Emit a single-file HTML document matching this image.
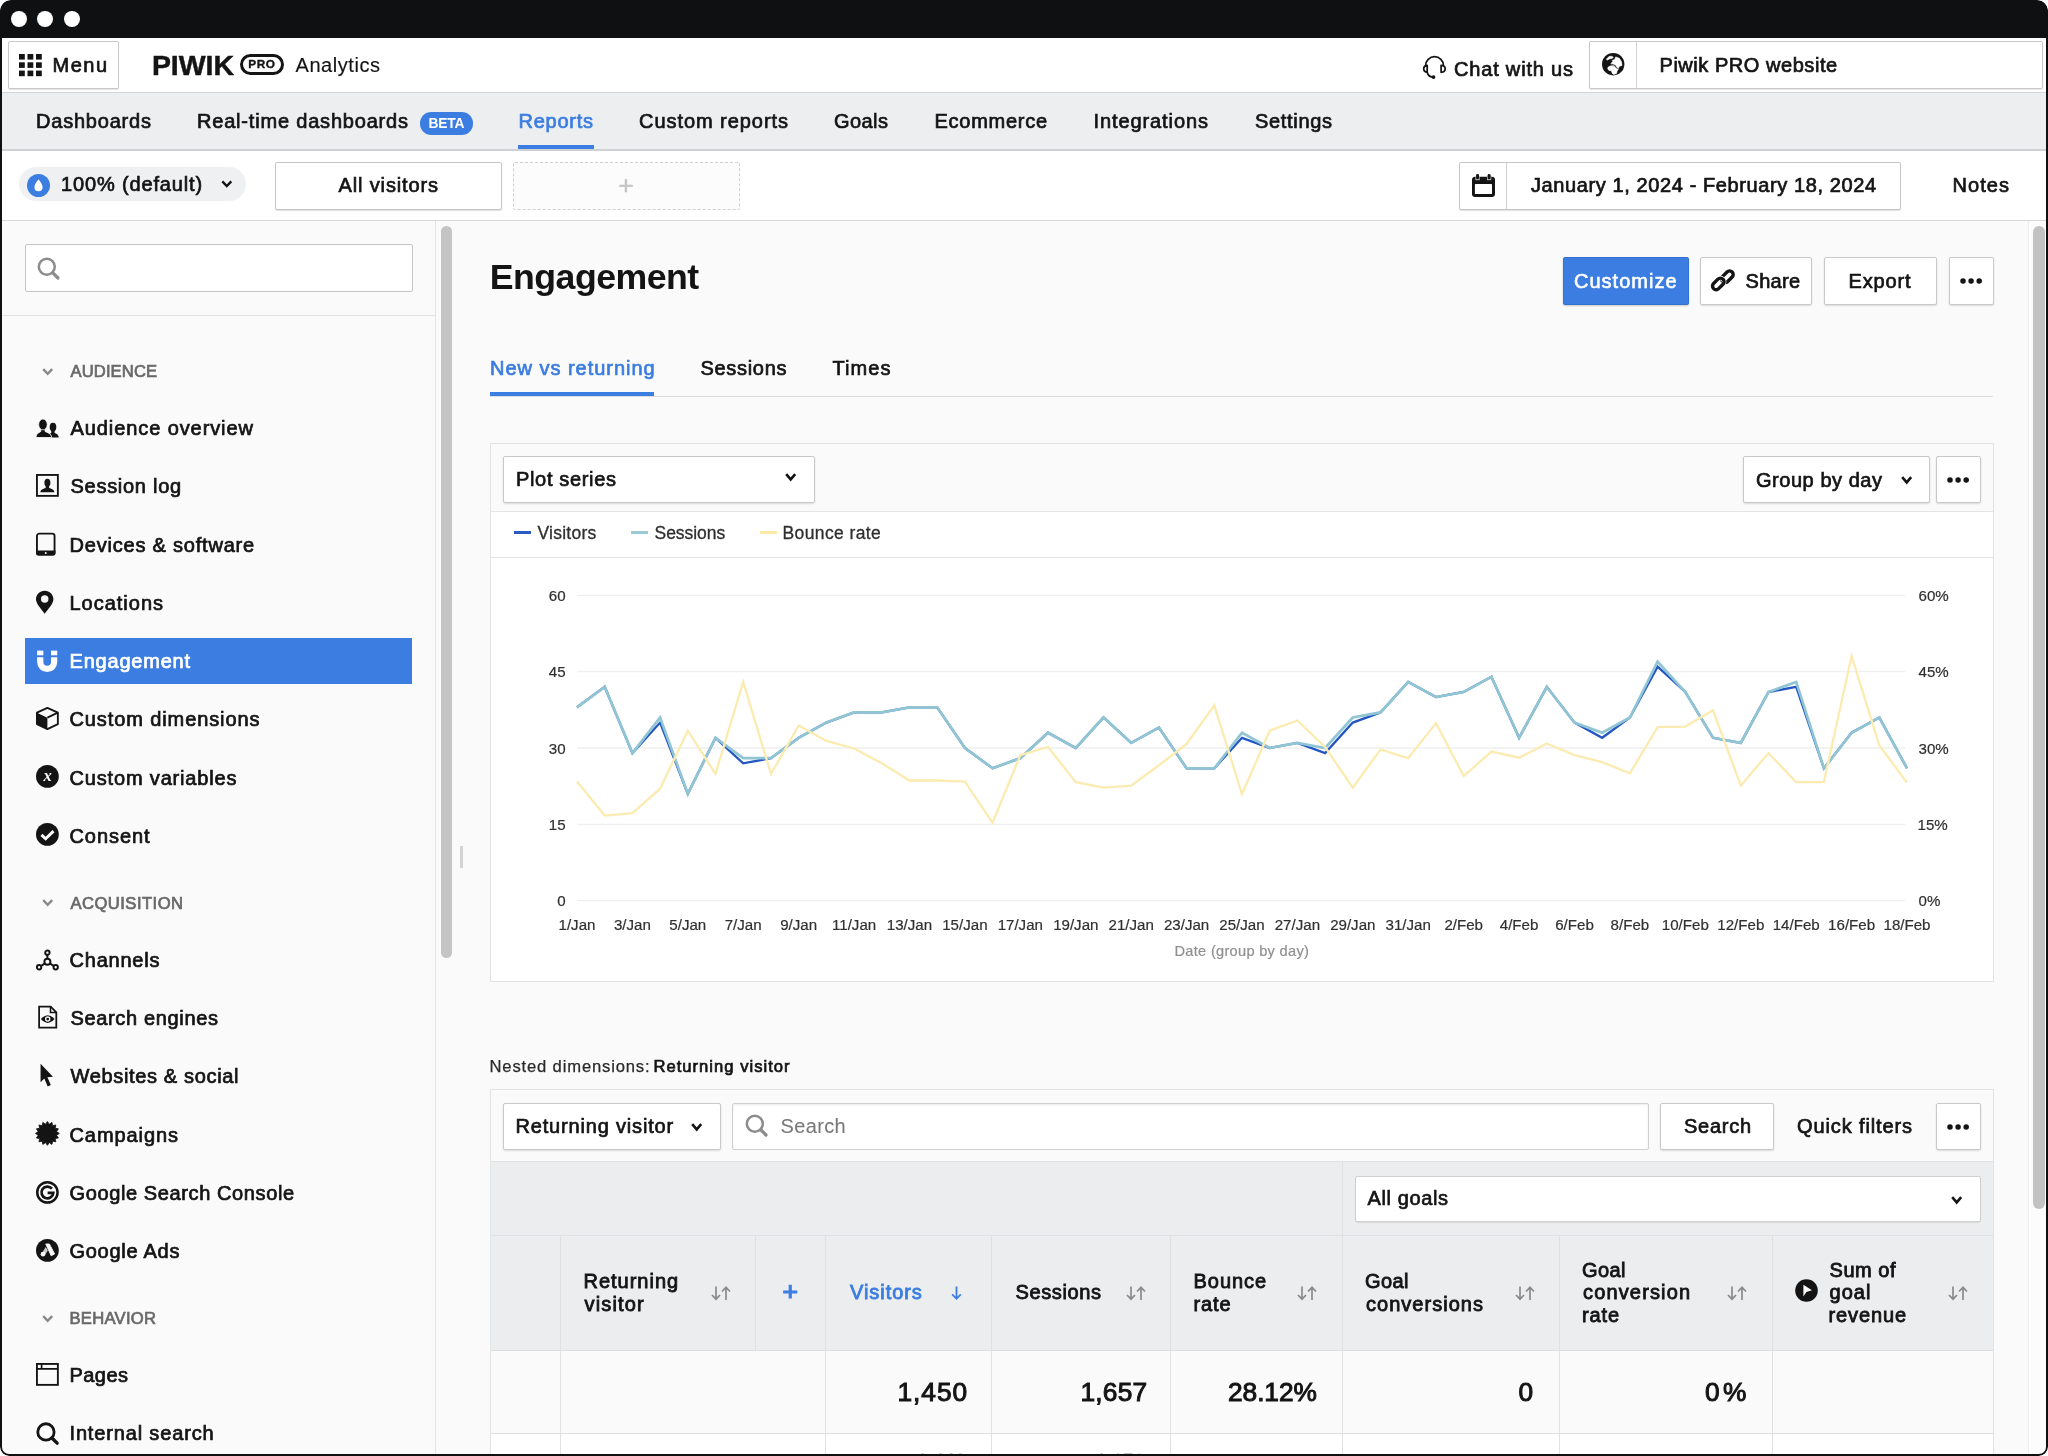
<!DOCTYPE html>
<html lang="en"><head><meta charset="utf-8"><title>Piwik PRO Analytics - Engagement</title>
<style>
html,body{margin:0;padding:0;background:#fff;}
body{width:2048px;height:1456px;overflow:hidden;position:relative;font-family:"Liberation Sans",sans-serif;}
.t{position:absolute;white-space:nowrap;line-height:1;}
svg{overflow:visible;}
</style></head><body>
<div style="position:absolute;left:0;top:0;width:2048px;height:1456px;overflow:hidden;border-radius:11px 11px 9px 9px;will-change:transform;">
<div style="position:absolute;left:0px;top:0px;width:2048px;height:1456px;background:#fafafa;"></div>
<div style="position:absolute;left:0px;top:38px;width:2048px;height:54px;background:#fff;"></div>
<div style="position:absolute;left:0px;top:92px;width:2048px;height:1px;background:#d3d5d8;"></div>
<div style="position:absolute;left:0px;top:93px;width:2048px;height:56px;background:#eceef0;"></div>
<div style="position:absolute;left:0px;top:149px;width:2048px;height:2px;background:#cfd1d4;"></div>
<div style="position:absolute;left:0px;top:151px;width:2048px;height:69px;background:#fff;"></div>
<div style="position:absolute;left:0px;top:220px;width:2048px;height:1px;background:#d6d8da;"></div>
<div style="position:absolute;left:8px;top:41px;width:111px;height:48px;box-sizing:border-box;border:1px solid #c9c9c9;border-radius:2px;background:#fff;box-shadow:0 1px 1px rgba(0,0,0,.12);"></div>
<svg style="position:absolute;left:19px;top:54px;" width="23" height="22.2" viewBox="0 0 23 22.2"><rect x="0.0" y="0.0" width="5.8" height="5.6" fill="#141414"/><rect x="8.5" y="0.0" width="5.8" height="5.6" fill="#141414"/><rect x="17.0" y="0.0" width="5.8" height="5.6" fill="#141414"/><rect x="0.0" y="8.3" width="5.8" height="5.6" fill="#141414"/><rect x="8.5" y="8.3" width="5.8" height="5.6" fill="#141414"/><rect x="17.0" y="8.3" width="5.8" height="5.6" fill="#141414"/><rect x="0.0" y="16.6" width="5.8" height="5.6" fill="#141414"/><rect x="8.5" y="16.6" width="5.8" height="5.6" fill="#141414"/><rect x="17.0" y="16.6" width="5.8" height="5.6" fill="#141414"/></svg>
<span class="t" style="left:52.50px;top:54.77px;font-size:20px;color:#141414;letter-spacing:1.531px;-webkit-text-stroke:0.7px #141414;">Menu</span>
<span class="t" style="left:151.90px;top:50.87px;font-size:28.5px;color:#141414;font-weight:700;letter-spacing:-0.061px;-webkit-text-stroke:0.45px #141414;paint-order:stroke;stroke-linejoin:round;">PIWIK</span>
<div style="position:absolute;left:239.5px;top:54.2px;width:44.2px;height:21.2px;box-sizing:border-box;border:3px solid #141414;border-radius:10.6px;"></div>
<span class="t" style="left:248.20px;top:58.91px;font-size:11.8px;color:#141414;font-weight:700;letter-spacing:0.606px;-webkit-text-stroke:0.35px #141414;">PRO</span>
<span class="t" style="left:295.50px;top:54.87px;font-size:20px;color:#141414;letter-spacing:0.559px;-webkit-text-stroke:0.15px #141414;">Analytics</span>
<svg style="position:absolute;left:1418px;top:50px;" width="34" height="34" viewBox="0 0 34 34"><g fill="none" stroke="#141414" stroke-width="1.75" stroke-linejoin="round"><path d="M7.6 15.6 A8.95 8.95 0 0 1 25.5 15.6"/><path d="M9.2 15.4 V22.1 Q5.7 21.9 5.7 18.7 Q5.7 15.6 9.2 15.4Z"/><path d="M23.1 15.4 V22.3 Q27.2 22.2 27.2 18.8 Q27.2 15.6 23.1 15.4Z"/><path d="M9.2 22.1 Q9.6 26.4 15 27.1"/></g><circle cx="15.5" cy="27.1" r="1.9" fill="#141414"/></svg>
<span class="t" style="left:1454.00px;top:59.27px;font-size:20px;color:#141414;letter-spacing:0.814px;-webkit-text-stroke:0.7px #141414;">Chat with us</span>
<div style="position:absolute;left:1589px;top:41px;width:454px;height:48px;box-sizing:border-box;border:1px solid #c9c9c9;border-radius:2px;background:#fff;box-shadow:0 1px 1px rgba(0,0,0,.10);"></div>
<div style="position:absolute;left:1636px;top:42px;width:1px;height:46px;background:#d4d4d4;"></div>
<svg style="position:absolute;left:1602px;top:53.4px;" width="22.4" height="22.4" viewBox="0 0 22.4 22.4"><circle cx="11.2" cy="11.2" r="11.2" fill="#141414"/><g fill="#fff" stroke="#fff" stroke-width="0.6" stroke-linejoin="round"><path d="M4.3 6.2 L7.1 3.6 L9.2 3.2 L11.3 4.1 L10.4 5.3 L7.1 6 L5.7 7.1Z"/><path d="M13.7 3.9 L17.4 5.3 L19.5 8.8 L20 12.5 L17.4 13.2 L16.5 15.1 L14.6 15.3 L13.4 13.4 L10.4 12.5 L9 11.1 L9.5 9.7 L10.9 8.8 L10.2 7.4 L12.7 6.4Z"/><path d="M6.2 14.1 L9 12.7 L11.8 13.4 L13.9 14.8 L16.5 15.8 L15.1 18.1 L14.6 20.4 L11.8 21.4 L10.2 20.4 L9.5 17.9 L6.7 17.2 L5.7 15.5Z"/></g><path d="M9.2 11.3 L13.2 12.4 L14.2 14.6 L15.6 15.4" fill="none" stroke="#141414" stroke-width="0.9"/></svg>
<span class="t" style="left:1659.50px;top:54.87px;font-size:20px;color:#141414;letter-spacing:0.543px;-webkit-text-stroke:0.7px #141414;">Piwik PRO website</span>
<span class="t" style="left:36.00px;top:111.27px;font-size:20px;color:#141414;letter-spacing:0.795px;-webkit-text-stroke:0.7px #141414;">Dashboards</span>
<span class="t" style="left:197.00px;top:111.27px;font-size:20px;color:#141414;letter-spacing:0.808px;-webkit-text-stroke:0.7px #141414;">Real-time dashboards</span>
<div style="position:absolute;left:420px;top:112px;width:53px;height:22.6px;background:#3b7de0;border-radius:11.3px;"></div>
<span class="t" style="left:428.50px;top:116.72px;font-size:13.8px;color:#fff;font-weight:700;letter-spacing:-0.190px;">BETA</span>
<span class="t" style="left:518.50px;top:111.27px;font-size:20px;color:#3b7de0;letter-spacing:0.745px;-webkit-text-stroke:0.7px #3b7de0;">Reports</span>
<div style="position:absolute;left:518px;top:144.7px;width:76px;height:4px;background:#3b7de0;"></div>
<span class="t" style="left:639.00px;top:111.27px;font-size:20px;color:#141414;letter-spacing:0.945px;-webkit-text-stroke:0.7px #141414;">Custom reports</span>
<span class="t" style="left:834.00px;top:111.27px;font-size:20px;color:#141414;letter-spacing:0.438px;-webkit-text-stroke:0.7px #141414;">Goals</span>
<span class="t" style="left:934.50px;top:111.27px;font-size:20px;color:#141414;letter-spacing:0.742px;-webkit-text-stroke:0.7px #141414;">Ecommerce</span>
<span class="t" style="left:1093.50px;top:111.27px;font-size:20px;color:#141414;letter-spacing:0.908px;-webkit-text-stroke:0.7px #141414;">Integrations</span>
<span class="t" style="left:1255.00px;top:111.27px;font-size:20px;color:#141414;letter-spacing:0.676px;-webkit-text-stroke:0.7px #141414;">Settings</span>
<div style="position:absolute;left:19px;top:167px;width:227px;height:34px;background:#eef0f2;border-radius:17px;"></div>
<svg style="position:absolute;left:27px;top:173.5px;" width="23" height="23" viewBox="0 0 23 23"><circle cx="11.5" cy="11.5" r="11.5" fill="#3b7de0"/><path d="M11.5 5.2 C13.5 8 15.6 10.6 15.6 13.2 A4.1 4.1 0 0 1 7.4 13.2 C7.4 10.6 9.5 8 11.5 5.2Z" fill="#fff"/></svg>
<span class="t" style="left:61.00px;top:174.47px;font-size:20px;color:#141414;letter-spacing:0.852px;-webkit-text-stroke:0.7px #141414;">100% (default)</span>
<svg style="position:absolute;left:220.6px;top:180px;" width="11.6" height="8" viewBox="0 0 11.6 8"><path d="M1.3 1.3 L5.8 6 L10.3 1.3" fill="none" stroke="#141414" stroke-width="2.4"/></svg>
<div style="position:absolute;left:275px;top:162px;width:227px;height:48px;box-sizing:border-box;border:1px solid #c6c6c6;border-radius:2px;background:#fff;box-shadow:0 1px 1px rgba(0,0,0,.12);"></div>
<span class="t" style="left:338.50px;top:175.27px;font-size:20px;color:#141414;letter-spacing:0.863px;-webkit-text-stroke:0.7px #141414;">All visitors</span>
<div style="position:absolute;left:513px;top:162px;width:227px;height:48px;box-sizing:border-box;border:1px dashed #d0d0d0;border-radius:2px;background:#fcfcfc;"></div>
<span class="t" style="left:618.30px;top:172.15px;font-size:26.4px;color:#c4c4c4;-webkit-text-stroke:0.5px #c4c4c4;">+</span>
<div style="position:absolute;left:1459px;top:162px;width:442.4px;height:48px;box-sizing:border-box;border:1px solid #c6c6c6;border-radius:2px;background:#fff;box-shadow:0 1px 1px rgba(0,0,0,.12);"></div>
<div style="position:absolute;left:1506.4px;top:163px;width:1px;height:46px;background:#d0d0d0;"></div>
<svg style="position:absolute;left:1472px;top:174px;" width="23" height="23" viewBox="0 0 23 23"><rect x="0" y="2.8" width="23" height="20.2" rx="3.2" fill="#141414"/><rect x="2.9" y="10.1" width="17.1" height="9.9" rx="0.6" fill="#fff"/><rect x="3.4" y="2.6" width="4.3" height="3.6" fill="#b5b5b5"/><rect x="15" y="2.6" width="4.3" height="3.6" fill="#b5b5b5"/><rect x="4.1" y="0" width="2.9" height="5.3" rx="1.2" fill="#141414"/><rect x="15.7" y="0" width="2.9" height="5.3" rx="1.2" fill="#141414"/></svg>
<span class="t" style="left:1531.00px;top:175.37px;font-size:20px;color:#141414;letter-spacing:0.602px;-webkit-text-stroke:0.7px #141414;">January 1, 2024 - February 18, 2024</span>
<span class="t" style="left:1952.50px;top:175.37px;font-size:20px;color:#141414;letter-spacing:1.063px;-webkit-text-stroke:0.7px #141414;">Notes</span>
<div style="position:absolute;left:0px;top:221px;width:436px;height:1235px;background:#fafafa;"></div>
<div style="position:absolute;left:435px;top:221px;width:1px;height:1235px;background:#e4e4e4;"></div>
<div style="position:absolute;left:25px;top:244px;width:388px;height:48px;box-sizing:border-box;border:1px solid #c6c6c6;background:#fff;border-radius:2px;"></div>
<svg style="position:absolute;left:37px;top:257px;" width="24" height="24" viewBox="0 0 24 24"><circle cx="9.8" cy="9.8" r="8" fill="none" stroke="#8c8c8c" stroke-width="2.5"/><path d="M15.8 15.8 L21 21" stroke="#8c8c8c" stroke-width="3.2" stroke-linecap="round"/></svg>
<div style="position:absolute;left:0px;top:315px;width:435px;height:1px;background:#e2e2e2;"></div>
<div style="position:absolute;left:441px;top:226px;width:11px;height:732px;background:#c4c4c4;border-radius:6px;"></div>
<div style="position:absolute;left:459.6px;top:846px;width:3.2px;height:22px;background:#d3d3d3;"></div>
<svg style="position:absolute;left:41.8px;top:367.9px;" width="11.4" height="7.6" viewBox="0 0 11.4 7.6"><path d="M1.2 1.2 L5.7 5.8 L10.2 1.2" fill="none" stroke="#8a8a8a" stroke-width="2.5"/></svg>
<span class="t" style="left:70.50px;top:364.05px;font-size:16.6px;color:#696969;letter-spacing:0.117px;-webkit-text-stroke:0.7px #696969;">AUDIENCE</span>
<svg style="position:absolute;left:35.9px;top:416.8px;" width="22.8" height="22.8" viewBox="0 0 22 22"><ellipse cx="16.4" cy="9.7" rx="3.2" ry="4.2" fill="#141414"/><path d="M13 19.9 V16.4 L14.7 15.4 V12.5 H18 V15.4 C20 16.3 21.8 16.9 22 19.9Z" fill="#141414"/><path d="M0 19.9 C0 15.8 2.8 15.2 4.6 13.9 L4.7 11 H8.7 L8.8 13.9 C11.5 15.2 14.6 15.8 15.2 19.9Z" fill="#141414" stroke="#fafafa" stroke-width="0.9"/><ellipse cx="6.7" cy="7.2" rx="4.1" ry="5.2" fill="#141414" stroke="#fafafa" stroke-width="0.7"/></svg>
<span class="t" style="left:70.50px;top:418.47px;font-size:20px;color:#141414;letter-spacing:0.911px;-webkit-text-stroke:0.72px #141414;">Audience overview</span>
<svg style="position:absolute;left:35.9px;top:474.3px;" width="22.8" height="22.8" viewBox="0 0 22 22"><rect x="0.9" y="0.9" width="20.2" height="20.2" fill="none" stroke="#141414" stroke-width="1.8"/><ellipse cx="11" cy="8.4" rx="2.9" ry="3.8" fill="#141414"/><path d="M4.2 17.6 C4.4 15.2 6.8 14.6 9.3 13.6 L9.4 11.5 H12.6 L12.7 13.6 C15.2 14.6 17.6 15.2 17.8 17.6Z" fill="#141414"/></svg>
<span class="t" style="left:70.50px;top:476.47px;font-size:20px;color:#141414;letter-spacing:0.722px;-webkit-text-stroke:0.72px #141414;">Session log</span>
<svg style="position:absolute;left:35.9px;top:532.5px;" width="22.8" height="22.8" viewBox="0 0 22 22"><rect x="0.9" y="0.6" width="17" height="20.2" rx="2.3" fill="none" stroke="#141414" stroke-width="1.8"/><path d="M0 16.8 H18.8 V19.2 Q18.8 21.7 16.3 21.7 H2.5 Q0 21.7 0 19.2Z" fill="#141414"/><circle cx="9.4" cy="19.3" r="0.95" fill="#fafafa"/></svg>
<span class="t" style="left:69.50px;top:534.97px;font-size:20px;color:#141414;letter-spacing:0.791px;-webkit-text-stroke:0.72px #141414;">Devices &amp; software</span>
<svg style="position:absolute;left:35.9px;top:591.1px;" width="22.8" height="22.8" viewBox="0 0 22 22"><path d="M8.4 -0.2 C13.2 -0.2 16.8 3.4 16.8 8 C16.8 12.6 11.6 17.4 8.4 22 C5.2 17.4 0 12.6 0 8 C0 3.4 3.6 -0.2 8.4 -0.2Z" fill="#141414"/><circle cx="8.4" cy="7.7" r="3.6" fill="#fafafa"/></svg>
<span class="t" style="left:69.50px;top:592.97px;font-size:20px;color:#141414;letter-spacing:0.986px;-webkit-text-stroke:0.72px #141414;">Locations</span>
<div style="position:absolute;left:25px;top:638px;width:387px;height:46px;background:#3b7de0;"></div>
<svg style="position:absolute;left:35.9px;top:649.8000000000001px;" width="22.8" height="22.8" viewBox="0 0 22 22"><rect x="1.1" y="0.6" width="6" height="4.5" fill="#fff"/><rect x="14.5" y="0.6" width="6" height="4.5" fill="#fff"/><path d="M1.1 6.9 H7.1 V11.6 A3.7 3.7 0 0 0 14.5 11.6 V6.9 H20.5 V11.6 A9.7 9.7 0 0 1 1.1 11.6Z" fill="#fff"/></svg>
<span class="t" style="left:69.50px;top:651.47px;font-size:20px;color:#fff;letter-spacing:0.793px;-webkit-text-stroke:0.72px #fff;">Engagement</span>
<svg style="position:absolute;left:35.9px;top:707.0px;" width="22.8" height="22.8" viewBox="0 0 22 22"><path d="M11 0.9 L21.1 5.5 V16.5 L11 21.3 L0.9 16.5 V5.5Z" fill="none" stroke="#141414" stroke-width="1.8" stroke-linejoin="round"/><path d="M0.9 5.5 L11 10.3 V21.3 L0.9 16.5Z" fill="#141414"/><path d="M11 10.3 L21.1 5.5" stroke="#141414" stroke-width="1.8"/></svg>
<span class="t" style="left:69.50px;top:709.47px;font-size:20px;color:#141414;letter-spacing:0.898px;-webkit-text-stroke:0.72px #141414;">Custom dimensions</span>
<svg style="position:absolute;left:35.9px;top:765.3000000000001px;" width="22.8" height="22.8" viewBox="0 0 22 22"><circle cx="11" cy="11" r="11" fill="#141414"/><text x="11.2" y="15.8" text-anchor="middle" font-family="Liberation Serif, serif" font-style="italic" font-weight="700" font-size="16" fill="#fafafa">x</text></svg>
<span class="t" style="left:69.50px;top:767.97px;font-size:20px;color:#141414;letter-spacing:0.833px;-webkit-text-stroke:0.72px #141414;">Custom variables</span>
<svg style="position:absolute;left:35.9px;top:823.4px;" width="22.8" height="22.8" viewBox="0 0 22 22"><circle cx="11" cy="11" r="11" fill="#141414"/><path d="M5.3 11.4 L9.3 15.2 L16.9 7.8" fill="none" stroke="#fafafa" stroke-width="2.9"/></svg>
<span class="t" style="left:69.50px;top:825.97px;font-size:20px;color:#141414;letter-spacing:0.927px;-webkit-text-stroke:0.72px #141414;">Consent</span>
<svg style="position:absolute;left:41.8px;top:899.4px;" width="11.4" height="7.6" viewBox="0 0 11.4 7.6"><path d="M1.2 1.2 L5.7 5.8 L10.2 1.2" fill="none" stroke="#8a8a8a" stroke-width="2.5"/></svg>
<span class="t" style="left:70.50px;top:895.55px;font-size:16.6px;color:#696969;letter-spacing:0.462px;-webkit-text-stroke:0.7px #696969;">ACQUISITION</span>
<svg style="position:absolute;left:35.9px;top:948.5px;" width="22.8" height="22.8" viewBox="0 0 22 22"><g fill="none" stroke="#141414" stroke-width="1.9"><circle cx="11" cy="3.5" r="2.1"/><circle cx="3" cy="17.6" r="2.1"/><circle cx="19" cy="17.6" r="2.1"/><circle cx="11" cy="12.4" r="2.9"/><path d="M11 5.3 V9.7 M8.7 13.9 L4.6 16.5 M13.3 13.9 L17.4 16.5"/></g></svg>
<span class="t" style="left:69.50px;top:950.47px;font-size:20px;color:#141414;letter-spacing:0.785px;-webkit-text-stroke:0.72px #141414;">Channels</span>
<svg style="position:absolute;left:35.9px;top:1006.0px;" width="22.8" height="22.8" viewBox="0 0 22 22"><path d="M3 0.7 H14.2 L19.6 6.1 V20.9 H3Z" fill="none" stroke="#141414" stroke-width="1.7"/><path d="M14 0.9 V6.3 H19.4" fill="none" stroke="#141414" stroke-width="1.5"/><path d="M4.7 12.6 Q11.3 5.2 17.9 12.6 Q11.3 20 4.7 12.6Z" fill="#141414"/><circle cx="11.3" cy="12.6" r="2.6" fill="#fafafa"/><circle cx="11.3" cy="12.6" r="1.35" fill="#141414"/></svg>
<span class="t" style="left:70.50px;top:1008.47px;font-size:20px;color:#141414;letter-spacing:0.655px;-webkit-text-stroke:0.72px #141414;">Search engines</span>
<svg style="position:absolute;left:35.9px;top:1064.3999999999999px;" width="22.8" height="22.8" viewBox="0 0 22 22"><path d="M4.4 -0.2 L16.4 12.2 L11 12.7 L14.3 20.2 L11.3 21.6 L8 14 L4.4 17.5Z" fill="#141414"/></svg>
<span class="t" style="left:70.50px;top:1066.47px;font-size:20px;color:#141414;letter-spacing:0.655px;-webkit-text-stroke:0.72px #141414;">Websites &amp; social</span>
<svg style="position:absolute;left:35.9px;top:1122.3999999999999px;" width="22.8" height="22.8" viewBox="0 0 22 22"><polygon points="11.00,-0.50 12.76,2.17 15.40,0.38 16.00,3.52 19.13,2.87 18.48,6.00 21.62,6.60 19.83,9.24 22.50,11.00 19.83,12.76 21.62,15.40 18.48,16.00 19.13,19.13 16.00,18.48 15.40,21.62 12.76,19.83 11.00,22.50 9.24,19.83 6.60,21.62 6.00,18.48 2.87,19.13 3.52,16.00 0.38,15.40 2.17,12.76 -0.50,11.00 2.17,9.24 0.38,6.60 3.52,6.00 2.87,2.87 6.00,3.52 6.60,0.38 9.24,2.17" fill="#141414" stroke="#141414" stroke-width="0.8" stroke-linejoin="round"/></svg>
<span class="t" style="left:69.50px;top:1124.97px;font-size:20px;color:#141414;letter-spacing:0.917px;-webkit-text-stroke:0.72px #141414;">Campaigns</span>
<svg style="position:absolute;left:35.9px;top:1180.6999999999998px;" width="22.8" height="22.8" viewBox="0 0 22 22"><circle cx="11" cy="11" r="9.8" fill="none" stroke="#141414" stroke-width="2.4"/><path d="M15.4 7.4 A5.7 5.7 0 1 0 16.7 11.5 H11.2" fill="none" stroke="#141414" stroke-width="2.6"/></svg>
<span class="t" style="left:69.50px;top:1182.97px;font-size:20px;color:#141414;letter-spacing:0.613px;-webkit-text-stroke:0.72px #141414;">Google Search Console</span>
<svg style="position:absolute;left:35.9px;top:1238.6999999999998px;" width="22.8" height="22.8" viewBox="0 0 22 22"><circle cx="11" cy="11" r="11" fill="#141414"/><path d="M9.4 4.8 L12.9 4.8 L18 14.4 L14.6 16.2Z" fill="#fafafa" stroke="#fafafa" stroke-width="0.8" stroke-linejoin="round"/><path d="M9.4 7.6 L11.4 11 L8.6 15.8 L5.4 14.2Z" fill="#fafafa" opacity=".8"/><circle cx="6.7" cy="14.6" r="2.2" fill="#fafafa"/></svg>
<span class="t" style="left:69.50px;top:1241.47px;font-size:20px;color:#141414;letter-spacing:0.721px;-webkit-text-stroke:0.72px #141414;">Google Ads</span>
<svg style="position:absolute;left:41.8px;top:1314.9px;" width="11.4" height="7.6" viewBox="0 0 11.4 7.6"><path d="M1.2 1.2 L5.7 5.8 L10.2 1.2" fill="none" stroke="#8a8a8a" stroke-width="2.5"/></svg>
<span class="t" style="left:69.50px;top:1311.05px;font-size:16.6px;color:#696969;letter-spacing:0.280px;-webkit-text-stroke:0.7px #696969;">BEHAVIOR</span>
<svg style="position:absolute;left:35.9px;top:1363.1999999999998px;" width="22.8" height="22.8" viewBox="0 0 22 22"><rect x="0.9" y="0.9" width="20.2" height="20.2" fill="none" stroke="#141414" stroke-width="1.8"/><path d="M1 5.6 H21 M5.4 1 V5.6" stroke="#141414" stroke-width="1.6"/></svg>
<span class="t" style="left:69.50px;top:1365.47px;font-size:20px;color:#141414;letter-spacing:0.448px;-webkit-text-stroke:0.72px #141414;">Pages</span>
<svg style="position:absolute;left:35.9px;top:1421.8999999999999px;" width="22.8" height="22.8" viewBox="0 0 22 22"><circle cx="9.6" cy="9.6" r="7.9" fill="none" stroke="#141414" stroke-width="2.7"/><path d="M15.4 15.4 L20.4 20.4" stroke="#141414" stroke-width="3.3" stroke-linecap="round"/></svg>
<span class="t" style="left:69.50px;top:1423.47px;font-size:20px;color:#141414;letter-spacing:0.845px;-webkit-text-stroke:0.72px #141414;">Internal search</span>
<div style="position:absolute;left:2028.4px;top:221px;width:1px;height:1235px;background:#eeeeee;"></div>
<div style="position:absolute;left:2029.4px;top:221px;width:17px;height:1235px;background:#fcfcfc;"></div>
<div style="position:absolute;left:2033px;top:226px;width:12px;height:983px;background:#c2c2c2;border-radius:6px;"></div>
<span class="t" style="left:489.80px;top:260.38px;font-size:35.7px;color:#141414;font-weight:700;letter-spacing:-0.531px;">Engagement</span>
<div style="position:absolute;left:1563px;top:257px;width:126px;height:48px;background:#3b7de0;border-radius:2px;box-shadow:0 1px 2px rgba(0,0,0,.2);box-sizing:border-box;border:1px solid #3572d0;"></div>
<span class="t" style="left:1574.00px;top:270.67px;font-size:20px;color:#fff;letter-spacing:1.019px;-webkit-text-stroke:0.6px #fff;">Customize</span>
<div style="position:absolute;left:1700px;top:257px;width:112px;height:48px;box-sizing:border-box;border:1px solid #c9c9c9;border-radius:2px;background:#fff;box-shadow:0 1px 2px rgba(0,0,0,.13);"></div>
<svg style="position:absolute;left:1708px;top:266px;" width="28" height="28" viewBox="0 0 28 28"><g fill="none"><rect x="-6.7" y="-3.6" width="13.4" height="7.2" rx="3.6" transform="translate(19.4 10.7) rotate(-45)" stroke="#141414" stroke-width="3.4"/><rect x="-6.7" y="-3.6" width="13.4" height="7.2" rx="3.6" transform="translate(10.3 17.9) rotate(-45)" stroke="#fff" stroke-width="4.6"/><rect x="-6.7" y="-3.6" width="13.4" height="7.2" rx="3.6" transform="translate(10.3 17.9) rotate(-45)" stroke="#141414" stroke-width="3.4"/></g></svg>
<span class="t" style="left:1745.50px;top:270.67px;font-size:20px;color:#141414;letter-spacing:0.313px;-webkit-text-stroke:0.7px #141414;">Share</span>
<div style="position:absolute;left:1824px;top:257px;width:113px;height:48px;box-sizing:border-box;border:1px solid #c9c9c9;border-radius:2px;background:#fff;box-shadow:0 1px 2px rgba(0,0,0,.13);"></div>
<span class="t" style="left:1848.50px;top:270.67px;font-size:20px;color:#141414;letter-spacing:0.851px;-webkit-text-stroke:0.7px #141414;">Export</span>
<div style="position:absolute;left:1949px;top:257px;width:45px;height:48px;box-sizing:border-box;border:1px solid #c9c9c9;border-radius:2px;background:#fff;box-shadow:0 1px 2px rgba(0,0,0,.13);"></div>
<svg style="position:absolute;left:1959.9px;top:278px;" width="22.2" height="6" viewBox="0 0 22.2 6"><circle cx="3.0" cy="3" r="2.75" fill="#141414"/><circle cx="11.1" cy="3" r="2.75" fill="#141414"/><circle cx="19.2" cy="3" r="2.75" fill="#141414"/></svg>
<span class="t" style="left:490.00px;top:357.67px;font-size:20px;color:#3b7de0;letter-spacing:0.971px;-webkit-text-stroke:0.7px #3b7de0;">New vs returning</span>
<span class="t" style="left:700.50px;top:357.67px;font-size:20px;color:#141414;letter-spacing:0.693px;-webkit-text-stroke:0.7px #141414;">Sessions</span>
<span class="t" style="left:832.50px;top:357.67px;font-size:20px;color:#141414;letter-spacing:1.075px;-webkit-text-stroke:0.7px #141414;">Times</span>
<div style="position:absolute;left:490px;top:396px;width:1503px;height:1px;background:#dcdde0;"></div>
<div style="position:absolute;left:490px;top:392px;width:164px;height:4px;background:#3b7de0;"></div>
<div style="position:absolute;left:490px;top:443px;width:1504px;height:539px;box-sizing:border-box;border:1px solid #e1e3e5;background:#fff;"></div>
<div style="position:absolute;left:491px;top:444px;width:1502px;height:67px;background:#fafafa;"></div>
<div style="position:absolute;left:491px;top:511px;width:1502px;height:1px;background:#e4e5e7;"></div>
<div style="position:absolute;left:491px;top:557px;width:1502px;height:1px;background:#e4e5e7;"></div>
<div style="position:absolute;left:503px;top:455.6px;width:312px;height:47.6px;box-sizing:border-box;border:1px solid #c9c9c9;border-radius:2px;background:#fff;box-shadow:0 1px 2px rgba(0,0,0,.13);"></div>
<span class="t" style="left:516.00px;top:469.37px;font-size:20px;color:#141414;letter-spacing:0.663px;-webkit-text-stroke:0.7px #141414;">Plot series</span>
<svg style="position:absolute;left:785.3px;top:472.8px;" width="11.4" height="7.8" viewBox="0 0 11.4 7.8"><path d="M1.2 1.2 L5.7 6.4 L10.200000000000001 1.2" fill="none" stroke="#141414" stroke-width="2.6"/></svg>
<div style="position:absolute;left:1743px;top:455.6px;width:187px;height:47.6px;box-sizing:border-box;border:1px solid #c9c9c9;border-radius:2px;background:#fff;box-shadow:0 1px 2px rgba(0,0,0,.13);"></div>
<span class="t" style="left:1756.00px;top:469.87px;font-size:20px;color:#141414;letter-spacing:0.539px;-webkit-text-stroke:0.7px #141414;">Group by day</span>
<svg style="position:absolute;left:1900.5px;top:476px;" width="11.4" height="7.8" viewBox="0 0 11.4 7.8"><path d="M1.2 1.2 L5.7 6.4 L10.200000000000001 1.2" fill="none" stroke="#141414" stroke-width="2.6"/></svg>
<div style="position:absolute;left:1936px;top:455.6px;width:45px;height:47.6px;box-sizing:border-box;border:1px solid #c9c9c9;border-radius:2px;background:#fff;box-shadow:0 1px 2px rgba(0,0,0,.13);"></div>
<svg style="position:absolute;left:1947.4px;top:476.5px;" width="22.2" height="6" viewBox="0 0 22.2 6"><circle cx="3.0" cy="3" r="2.75" fill="#141414"/><circle cx="11.1" cy="3" r="2.75" fill="#141414"/><circle cx="19.2" cy="3" r="2.75" fill="#141414"/></svg>
<div style="position:absolute;left:514px;top:531.4px;width:17px;height:2.6px;background:#2b5cc6;"></div>
<span class="t" style="left:537.50px;top:524.99px;font-size:17.5px;color:#2e2e2e;letter-spacing:0.242px;-webkit-text-stroke:0.3px #2e2e2e;">Visitors</span>
<div style="position:absolute;left:631px;top:531.4px;width:17px;height:2.6px;background:#9ccbd5;"></div>
<span class="t" style="left:654.50px;top:524.99px;font-size:17.5px;color:#2e2e2e;letter-spacing:-0.037px;-webkit-text-stroke:0.3px #2e2e2e;">Sessions</span>
<div style="position:absolute;left:760px;top:531.4px;width:17px;height:2.6px;background:#fce9a6;"></div>
<span class="t" style="left:782.50px;top:524.99px;font-size:17.5px;color:#2e2e2e;letter-spacing:0.386px;-webkit-text-stroke:0.3px #2e2e2e;">Bounce rate</span>
<svg style="position:absolute;left:0;top:0" width="2048" height="1456" viewBox="0 0 2048 1456"><line x1="577" x2="1905" y1="900.6" y2="900.6" stroke="#efeff1" stroke-width="1.3"/><line x1="577" x2="1905" y1="824.3" y2="824.3" stroke="#efeff1" stroke-width="1.3"/><line x1="577" x2="1905" y1="748.0" y2="748.0" stroke="#efeff1" stroke-width="1.3"/><line x1="577" x2="1905" y1="671.7" y2="671.7" stroke="#efeff1" stroke-width="1.3"/><line x1="577" x2="1905" y1="595.4" y2="595.4" stroke="#efeff1" stroke-width="1.3"/><polyline points="577.0,707.3 604.7,686.9 632.4,753.1 660.1,722.6 687.8,793.8 715.5,737.8 743.2,763.3 771.0,758.2 798.7,737.8 826.4,722.6 854.1,712.4 881.8,712.4 909.5,707.3 937.2,707.3 964.9,748.0 992.6,768.3 1020.3,758.2 1048.0,732.7 1075.8,748.0 1103.5,717.5 1131.2,742.9 1158.9,727.6 1186.6,768.3 1214.3,768.3 1242.0,737.8 1269.7,748.0 1297.4,742.9 1325.1,753.1 1352.8,722.6 1380.5,712.4 1408.2,681.9 1436.0,697.1 1463.7,692.0 1491.4,676.8 1519.1,737.8 1546.8,686.9 1574.5,722.6 1602.2,737.8 1629.9,717.5 1657.6,666.6 1685.3,692.0 1713.0,737.8 1740.8,742.9 1768.5,692.0 1796.2,686.9 1823.9,768.3 1851.6,732.7 1879.3,717.5 1907.0,768.3" fill="none" stroke="#2256c4" stroke-width="2.3" stroke-linejoin="miter"/><polyline points="577.0,707.3 604.7,686.9 632.4,753.1 660.1,717.5 687.8,793.8 715.5,737.8 743.2,758.2 771.0,758.2 798.7,737.8 826.4,722.6 854.1,712.4 881.8,712.4 909.5,707.3 937.2,707.3 964.9,748.0 992.6,768.3 1020.3,758.2 1048.0,732.7 1075.8,748.0 1103.5,717.5 1131.2,742.9 1158.9,727.6 1186.6,768.3 1214.3,768.3 1242.0,732.7 1269.7,748.0 1297.4,742.9 1325.1,748.0 1352.8,717.5 1380.5,712.4 1408.2,681.9 1436.0,697.1 1463.7,692.0 1491.4,676.8 1519.1,737.8 1546.8,686.9 1574.5,722.6 1602.2,732.7 1629.9,717.5 1657.6,661.5 1685.3,692.0 1713.0,737.8 1740.8,742.9 1768.5,692.0 1796.2,681.9 1823.9,768.3 1851.6,732.7 1879.3,717.5 1907.0,768.3" fill="none" stroke="#92c5d4" stroke-width="2.7" stroke-linejoin="miter"/><polyline points="577.0,781.6 604.7,815.6 632.4,813.1 660.1,788.7 687.8,730.7 715.5,773.9 743.2,681.9 771.0,773.9 798.7,725.6 826.4,740.9 854.1,748.5 881.8,763.3 909.5,780.5 937.2,780.5 964.9,781.6 992.6,822.8 1020.3,755.1 1048.0,747.0 1075.8,782.1 1103.5,787.7 1131.2,785.6 1158.9,765.3 1186.6,743.9 1214.3,705.3 1242.0,794.3 1269.7,730.7 1297.4,720.5 1325.1,747.0 1352.8,787.7 1380.5,749.5 1408.2,758.2 1436.0,723.1 1463.7,776.0 1491.4,751.6 1519.1,757.7 1546.8,743.4 1574.5,755.1 1602.2,762.2 1629.9,773.4 1657.6,727.1 1685.3,726.6 1713.0,710.3 1740.8,785.6 1768.5,753.1 1796.2,782.1 1823.9,782.1 1851.6,655.9 1879.3,745.4 1907.0,782.6" fill="none" stroke="#fcebb0" stroke-width="2.3" stroke-linejoin="miter"/></svg>
<span class="t" style="top:588.00px;font-size:15.1px;color:#303030;-webkit-text-stroke:0.2px #303030;left:auto;right:1482.4px;">60</span>
<span class="t" style="left:1918.50px;top:588.00px;font-size:15.1px;color:#303030;-webkit-text-stroke:0.2px #303030;">60%</span>
<span class="t" style="top:664.30px;font-size:15.1px;color:#303030;-webkit-text-stroke:0.2px #303030;left:auto;right:1482.4px;">45</span>
<span class="t" style="left:1918.50px;top:664.30px;font-size:15.1px;color:#303030;-webkit-text-stroke:0.2px #303030;">45%</span>
<span class="t" style="top:740.61px;font-size:15.1px;color:#303030;-webkit-text-stroke:0.2px #303030;left:auto;right:1482.4px;">30</span>
<span class="t" style="left:1918.50px;top:740.61px;font-size:15.1px;color:#303030;-webkit-text-stroke:0.2px #303030;">30%</span>
<span class="t" style="top:816.91px;font-size:15.1px;color:#303030;-webkit-text-stroke:0.2px #303030;left:auto;right:1482.4px;">15</span>
<span class="t" style="left:1917.50px;top:816.91px;font-size:15.1px;color:#303030;-webkit-text-stroke:0.2px #303030;">15%</span>
<span class="t" style="top:893.22px;font-size:15.1px;color:#303030;-webkit-text-stroke:0.2px #303030;left:auto;right:1482.4px;">0</span>
<span class="t" style="left:1918.50px;top:893.22px;font-size:15.1px;color:#303030;-webkit-text-stroke:0.2px #303030;">0%</span>
<span class="t" style="top:917.02px;font-size:15.1px;color:#303030;-webkit-text-stroke:0.2px #303030;left:517.0px;width:120px;text-align:center;">1/Jan</span>
<span class="t" style="top:917.02px;font-size:15.1px;color:#303030;-webkit-text-stroke:0.2px #303030;left:572.4px;width:120px;text-align:center;">3/Jan</span>
<span class="t" style="top:917.02px;font-size:15.1px;color:#303030;-webkit-text-stroke:0.2px #303030;left:627.8px;width:120px;text-align:center;">5/Jan</span>
<span class="t" style="top:917.02px;font-size:15.1px;color:#303030;-webkit-text-stroke:0.2px #303030;left:683.2px;width:120px;text-align:center;">7/Jan</span>
<span class="t" style="top:917.02px;font-size:15.1px;color:#303030;-webkit-text-stroke:0.2px #303030;left:738.7px;width:120px;text-align:center;">9/Jan</span>
<span class="t" style="top:917.02px;font-size:15.1px;color:#303030;-webkit-text-stroke:0.2px #303030;left:794.1px;width:120px;text-align:center;">11/Jan</span>
<span class="t" style="top:917.02px;font-size:15.1px;color:#303030;-webkit-text-stroke:0.2px #303030;left:849.5px;width:120px;text-align:center;">13/Jan</span>
<span class="t" style="top:917.02px;font-size:15.1px;color:#303030;-webkit-text-stroke:0.2px #303030;left:904.9px;width:120px;text-align:center;">15/Jan</span>
<span class="t" style="top:917.02px;font-size:15.1px;color:#303030;-webkit-text-stroke:0.2px #303030;left:960.3px;width:120px;text-align:center;">17/Jan</span>
<span class="t" style="top:917.02px;font-size:15.1px;color:#303030;-webkit-text-stroke:0.2px #303030;left:1015.8px;width:120px;text-align:center;">19/Jan</span>
<span class="t" style="top:917.02px;font-size:15.1px;color:#303030;-webkit-text-stroke:0.2px #303030;left:1071.2px;width:120px;text-align:center;">21/Jan</span>
<span class="t" style="top:917.02px;font-size:15.1px;color:#303030;-webkit-text-stroke:0.2px #303030;left:1126.6px;width:120px;text-align:center;">23/Jan</span>
<span class="t" style="top:917.02px;font-size:15.1px;color:#303030;-webkit-text-stroke:0.2px #303030;left:1182.0px;width:120px;text-align:center;">25/Jan</span>
<span class="t" style="top:917.02px;font-size:15.1px;color:#303030;-webkit-text-stroke:0.2px #303030;left:1237.4px;width:120px;text-align:center;">27/Jan</span>
<span class="t" style="top:917.02px;font-size:15.1px;color:#303030;-webkit-text-stroke:0.2px #303030;left:1292.8px;width:120px;text-align:center;">29/Jan</span>
<span class="t" style="top:917.02px;font-size:15.1px;color:#303030;-webkit-text-stroke:0.2px #303030;left:1348.2px;width:120px;text-align:center;">31/Jan</span>
<span class="t" style="top:917.02px;font-size:15.1px;color:#303030;-webkit-text-stroke:0.2px #303030;left:1403.7px;width:120px;text-align:center;">2/Feb</span>
<span class="t" style="top:917.02px;font-size:15.1px;color:#303030;-webkit-text-stroke:0.2px #303030;left:1459.1px;width:120px;text-align:center;">4/Feb</span>
<span class="t" style="top:917.02px;font-size:15.1px;color:#303030;-webkit-text-stroke:0.2px #303030;left:1514.5px;width:120px;text-align:center;">6/Feb</span>
<span class="t" style="top:917.02px;font-size:15.1px;color:#303030;-webkit-text-stroke:0.2px #303030;left:1569.9px;width:120px;text-align:center;">8/Feb</span>
<span class="t" style="top:917.02px;font-size:15.1px;color:#303030;-webkit-text-stroke:0.2px #303030;left:1625.3px;width:120px;text-align:center;">10/Feb</span>
<span class="t" style="top:917.02px;font-size:15.1px;color:#303030;-webkit-text-stroke:0.2px #303030;left:1680.8px;width:120px;text-align:center;">12/Feb</span>
<span class="t" style="top:917.02px;font-size:15.1px;color:#303030;-webkit-text-stroke:0.2px #303030;left:1736.2px;width:120px;text-align:center;">14/Feb</span>
<span class="t" style="top:917.02px;font-size:15.1px;color:#303030;-webkit-text-stroke:0.2px #303030;left:1791.6px;width:120px;text-align:center;">16/Feb</span>
<span class="t" style="top:917.02px;font-size:15.1px;color:#303030;-webkit-text-stroke:0.2px #303030;left:1847.0px;width:120px;text-align:center;">18/Feb</span>
<span class="t" style="left:1174.50px;top:943.84px;font-size:14.6px;color:#8f8f8f;letter-spacing:0.299px;-webkit-text-stroke:0.2px #8f8f8f;">Date (group by day)</span>
<span class="t" style="left:489.50px;top:1058.95px;font-size:16.6px;color:#2a2a2a;letter-spacing:0.846px;-webkit-text-stroke:0.25px #2a2a2a;">Nested dimensions:</span>
<span class="t" style="left:653.50px;top:1058.95px;font-size:16.6px;color:#141414;letter-spacing:1.008px;-webkit-text-stroke:0.7px #141414;">Returning visitor</span>
<div style="position:absolute;left:490px;top:1089px;width:1504px;height:380px;box-sizing:border-box;border:1px solid #e1e3e5;background:#fafafa;"></div>
<div style="position:absolute;left:503px;top:1102.6px;width:218px;height:47.4px;box-sizing:border-box;border:1px solid #c9c9c9;border-radius:2px;background:#fff;box-shadow:0 1px 2px rgba(0,0,0,.13);"></div>
<span class="t" style="left:515.50px;top:1115.57px;font-size:20px;color:#141414;letter-spacing:0.822px;-webkit-text-stroke:0.7px #141414;">Returning visitor</span>
<svg style="position:absolute;left:691px;top:1123px;" width="11.4" height="7.8" viewBox="0 0 11.4 7.8"><path d="M1.2 1.2 L5.7 6.4 L10.200000000000001 1.2" fill="none" stroke="#141414" stroke-width="2.6"/></svg>
<div style="position:absolute;left:732px;top:1102.6px;width:917px;height:47.4px;box-sizing:border-box;border:1px solid #d0d0d0;border-radius:2px;background:#fff;box-shadow:inset 0 1px 2px rgba(0,0,0,.08);"></div>
<svg style="position:absolute;left:745px;top:1114px;" width="24" height="24" viewBox="0 0 24 24"><circle cx="9.8" cy="9.8" r="8" fill="none" stroke="#8c8c8c" stroke-width="2.5"/><path d="M15.8 15.8 L21 21" stroke="#8c8c8c" stroke-width="3.2" stroke-linecap="round"/></svg>
<span class="t" style="left:780.50px;top:1115.87px;font-size:20px;color:#7a7a7a;letter-spacing:0.351px;-webkit-text-stroke:0.1px #7a7a7a;">Search</span>
<div style="position:absolute;left:1660px;top:1102.6px;width:114px;height:47.4px;box-sizing:border-box;border:1px solid #c9c9c9;border-radius:2px;background:#fff;box-shadow:0 1px 2px rgba(0,0,0,.13);"></div>
<span class="t" style="left:1684.00px;top:1115.87px;font-size:20px;color:#141414;letter-spacing:0.751px;-webkit-text-stroke:0.7px #141414;">Search</span>
<span class="t" style="left:1797.00px;top:1115.87px;font-size:20px;color:#141414;letter-spacing:0.878px;-webkit-text-stroke:0.7px #141414;">Quick filters</span>
<div style="position:absolute;left:1936px;top:1102.6px;width:45px;height:47.4px;box-sizing:border-box;border:1px solid #c9c9c9;border-radius:2px;background:#fff;box-shadow:0 1px 2px rgba(0,0,0,.13);"></div>
<svg style="position:absolute;left:1947.4px;top:1123.5px;" width="22.2" height="6" viewBox="0 0 22.2 6"><circle cx="3.0" cy="3" r="2.75" fill="#141414"/><circle cx="11.1" cy="3" r="2.75" fill="#141414"/><circle cx="19.2" cy="3" r="2.75" fill="#141414"/></svg>
<div style="position:absolute;left:491px;top:1161.4px;width:1502px;height:188.6px;background:#ecedef;"></div>
<div style="position:absolute;left:491px;top:1161.4px;width:1502px;height:1px;background:#e0e1e3;"></div>
<div style="position:absolute;left:491px;top:1234.5px;width:1502px;height:1.2px;background:#e0e1e4;"></div>
<div style="position:absolute;left:491px;top:1349.5px;width:1502px;height:1.2px;background:#dcdddf;"></div>
<div style="position:absolute;left:1354.5px;top:1175.5px;width:626px;height:46.5px;box-sizing:border-box;border:1px solid #d0d0d0;border-radius:2px;background:#fff;box-shadow:0 1px 1px rgba(0,0,0,.08);"></div>
<span class="t" style="left:1367.50px;top:1188.07px;font-size:20px;color:#141414;letter-spacing:0.613px;-webkit-text-stroke:0.7px #141414;">All goals</span>
<svg style="position:absolute;left:1951px;top:1195.5px;" width="11.4" height="7.8" viewBox="0 0 11.4 7.8"><path d="M1.2 1.2 L5.7 6.4 L10.200000000000001 1.2" fill="none" stroke="#141414" stroke-width="2.6"/></svg>
<div style="position:absolute;left:560px;top:1235px;width:1px;height:300px;background:#dfe0e2;"></div>
<div style="position:absolute;left:755px;top:1235px;width:1px;height:115px;background:#dfe0e2;"></div>
<div style="position:absolute;left:824.5px;top:1235px;width:1px;height:300px;background:#dfe0e2;"></div>
<div style="position:absolute;left:991px;top:1235px;width:1px;height:300px;background:#dfe0e2;"></div>
<div style="position:absolute;left:1170px;top:1235px;width:1px;height:300px;background:#dfe0e2;"></div>
<div style="position:absolute;left:1341.5px;top:1162px;width:1px;height:300px;background:#dfe0e2;"></div>
<div style="position:absolute;left:1558.5px;top:1235px;width:1px;height:300px;background:#dfe0e2;"></div>
<div style="position:absolute;left:1771.5px;top:1235px;width:1px;height:300px;background:#dfe0e2;"></div>
<div style="position:absolute;left:491px;top:1350.6px;width:1502px;height:82.4px;background:#fafafa;"></div>
<div style="position:absolute;left:560px;top:1350px;width:1px;height:110px;background:#e2e2e4;"></div>
<div style="position:absolute;left:824.5px;top:1350px;width:1px;height:110px;background:#e2e2e4;"></div>
<div style="position:absolute;left:991px;top:1350px;width:1px;height:110px;background:#e2e2e4;"></div>
<div style="position:absolute;left:1170px;top:1350px;width:1px;height:110px;background:#e2e2e4;"></div>
<div style="position:absolute;left:1341.5px;top:1350px;width:1px;height:110px;background:#e2e2e4;"></div>
<div style="position:absolute;left:1558.5px;top:1350px;width:1px;height:110px;background:#e2e2e4;"></div>
<div style="position:absolute;left:1771.5px;top:1350px;width:1px;height:110px;background:#e2e2e4;"></div>
<div style="position:absolute;left:491px;top:1433px;width:1502px;height:1px;background:#dedfe1;"></div>
<div style="position:absolute;left:491px;top:1434px;width:1502px;height:30px;background:#fff;"></div>
<div style="position:absolute;left:560px;top:1434px;width:1px;height:30px;background:#e2e2e4;"></div>
<div style="position:absolute;left:824.5px;top:1434px;width:1px;height:30px;background:#e2e2e4;"></div>
<div style="position:absolute;left:991px;top:1434px;width:1px;height:30px;background:#e2e2e4;"></div>
<div style="position:absolute;left:1170px;top:1434px;width:1px;height:30px;background:#e2e2e4;"></div>
<div style="position:absolute;left:1341.5px;top:1434px;width:1px;height:30px;background:#e2e2e4;"></div>
<div style="position:absolute;left:1558.5px;top:1434px;width:1px;height:30px;background:#e2e2e4;"></div>
<div style="position:absolute;left:1771.5px;top:1434px;width:1px;height:30px;background:#e2e2e4;"></div>
<span class="t" style="left:583.50px;top:1271.07px;font-size:20px;color:#141414;letter-spacing:0.988px;-webkit-text-stroke:0.85px #141414;">Returning</span>
<span class="t" style="left:584.50px;top:1293.57px;font-size:20px;color:#141414;letter-spacing:1.156px;-webkit-text-stroke:0.85px #141414;">visitor</span>
<svg style="position:absolute;left:711px;top:1285.5px;" width="20" height="14" viewBox="0 0 20 14"><g fill="none" stroke="#8a8a8a" stroke-width="1.7"><path d="M5 0.5 V13 M1 9 L5 13.2 L9 9"/><path d="M15 14 V1.5 M11 5.5 L15 1.3 L19 5.5"/></g></svg>
<span class="t" style="left:782.40px;top:1278.47px;font-size:26.5px;color:#3b7de0;-webkit-text-stroke:1.2px #3b7de0;">+</span>
<span class="t" style="left:850.00px;top:1282.27px;font-size:20px;color:#3b7de0;letter-spacing:0.942px;-webkit-text-stroke:0.85px #3b7de0;">Visitors</span>
<svg style="position:absolute;left:951px;top:1285.5px;" width="11" height="14" viewBox="0 0 11 14"><path d="M5.5 0.5 V12.6 M1.2 8.4 L5.5 12.8 L9.8 8.4" fill="none" stroke="#3b7de0" stroke-width="1.8"/></svg>
<span class="t" style="left:1015.50px;top:1282.27px;font-size:20px;color:#141414;letter-spacing:0.621px;-webkit-text-stroke:0.85px #141414;">Sessions</span>
<svg style="position:absolute;left:1125.5px;top:1285.5px;" width="20" height="14" viewBox="0 0 20 14"><g fill="none" stroke="#8a8a8a" stroke-width="1.7"><path d="M5 0.5 V13 M1 9 L5 13.2 L9 9"/><path d="M15 14 V1.5 M11 5.5 L15 1.3 L19 5.5"/></g></svg>
<span class="t" style="left:1193.50px;top:1271.07px;font-size:20px;color:#141414;letter-spacing:0.958px;-webkit-text-stroke:0.85px #141414;">Bounce</span>
<span class="t" style="left:1193.50px;top:1293.57px;font-size:20px;color:#141414;letter-spacing:0.887px;-webkit-text-stroke:0.85px #141414;">rate</span>
<svg style="position:absolute;left:1297px;top:1285.5px;" width="20" height="14" viewBox="0 0 20 14"><g fill="none" stroke="#8a8a8a" stroke-width="1.7"><path d="M5 0.5 V13 M1 9 L5 13.2 L9 9"/><path d="M15 14 V1.5 M11 5.5 L15 1.3 L19 5.5"/></g></svg>
<span class="t" style="left:1365.00px;top:1271.07px;font-size:20px;color:#141414;letter-spacing:0.399px;-webkit-text-stroke:0.85px #141414;">Goal</span>
<span class="t" style="left:1366.00px;top:1293.57px;font-size:20px;color:#141414;letter-spacing:1.028px;-webkit-text-stroke:0.85px #141414;">conversions</span>
<svg style="position:absolute;left:1514.5px;top:1285.5px;" width="20" height="14" viewBox="0 0 20 14"><g fill="none" stroke="#8a8a8a" stroke-width="1.7"><path d="M5 0.5 V13 M1 9 L5 13.2 L9 9"/><path d="M15 14 V1.5 M11 5.5 L15 1.3 L19 5.5"/></g></svg>
<span class="t" style="left:1582.00px;top:1259.57px;font-size:20px;color:#141414;letter-spacing:0.399px;-webkit-text-stroke:0.85px #141414;">Goal</span>
<span class="t" style="left:1583.00px;top:1282.27px;font-size:20px;color:#141414;letter-spacing:1.156px;-webkit-text-stroke:0.85px #141414;">conversion</span>
<span class="t" style="left:1582.00px;top:1305.07px;font-size:20px;color:#141414;letter-spacing:0.887px;-webkit-text-stroke:0.85px #141414;">rate</span>
<svg style="position:absolute;left:1727px;top:1285.5px;" width="20" height="14" viewBox="0 0 20 14"><g fill="none" stroke="#8a8a8a" stroke-width="1.7"><path d="M5 0.5 V13 M1 9 L5 13.2 L9 9"/><path d="M15 14 V1.5 M11 5.5 L15 1.3 L19 5.5"/></g></svg>
<svg style="position:absolute;left:1794.5px;top:1279px;" width="23" height="23" viewBox="0 0 23 23"><circle cx="11.5" cy="11.5" r="11.3" fill="#141414"/><path d="M8.4 5.8 L17 11.2 L11.4 13 L8.4 17.6Z" fill="#fafafa"/></svg>
<span class="t" style="left:1829.50px;top:1259.57px;font-size:20px;color:#141414;letter-spacing:0.539px;-webkit-text-stroke:0.85px #141414;">Sum of</span>
<span class="t" style="left:1829.50px;top:1282.27px;font-size:20px;color:#141414;letter-spacing:1.044px;-webkit-text-stroke:0.85px #141414;">goal</span>
<span class="t" style="left:1828.50px;top:1305.07px;font-size:20px;color:#141414;letter-spacing:0.891px;-webkit-text-stroke:0.85px #141414;">revenue</span>
<svg style="position:absolute;left:1948px;top:1285.5px;" width="20" height="14" viewBox="0 0 20 14"><g fill="none" stroke="#8a8a8a" stroke-width="1.7"><path d="M5 0.5 V13 M1 9 L5 13.2 L9 9"/><path d="M15 14 V1.5 M11 5.5 L15 1.3 L19 5.5"/></g></svg>
<span class="t" style="left:897.50px;top:1378.94px;font-size:26.3px;color:#141414;letter-spacing:0.955px;-webkit-text-stroke:1.0px #141414;">1,450</span>
<span class="t" style="left:1080.50px;top:1378.94px;font-size:26.3px;color:#141414;letter-spacing:0.205px;-webkit-text-stroke:1.0px #141414;">1,657</span>
<span class="t" style="left:1228.00px;top:1378.94px;font-size:26.3px;color:#141414;letter-spacing:-0.061px;-webkit-text-stroke:1.0px #141414;">28.12%</span>
<span class="t" style="left:1518.50px;top:1378.94px;font-size:26.3px;color:#141414;-webkit-text-stroke:1.0px #141414;">0</span>
<span class="t" style="left:1705.00px;top:1378.94px;font-size:26.3px;color:#141414;letter-spacing:3.375px;-webkit-text-stroke:1.0px #141414;">0%</span>
<span class="t" style="left:916.50px;top:1450.85px;font-size:20.5px;color:#141414;letter-spacing:-0.475px;-webkit-text-stroke:0.3px #141414;">1,443</span>
<span class="t" style="left:1095.50px;top:1450.85px;font-size:20.5px;color:#141414;letter-spacing:-0.475px;-webkit-text-stroke:0.3px #141414;">1,650</span>
<div style="position:absolute;left:0;top:0;width:2048px;height:1456px;box-sizing:border-box;border:2px solid #0f1012;border-top-width:38px;border-radius:11px 11px 9px 9px;z-index:50;"></div>
<div style="position:absolute;left:11px;top:11px;width:16px;height:16px;background:#fff;border-radius:50%;z-index:51;"></div>
<div style="position:absolute;left:37px;top:11px;width:16px;height:16px;background:#fff;border-radius:50%;z-index:51;"></div>
<div style="position:absolute;left:63.5px;top:11px;width:16px;height:16px;background:#fff;border-radius:50%;z-index:51;"></div>
</div>
</body></html>
